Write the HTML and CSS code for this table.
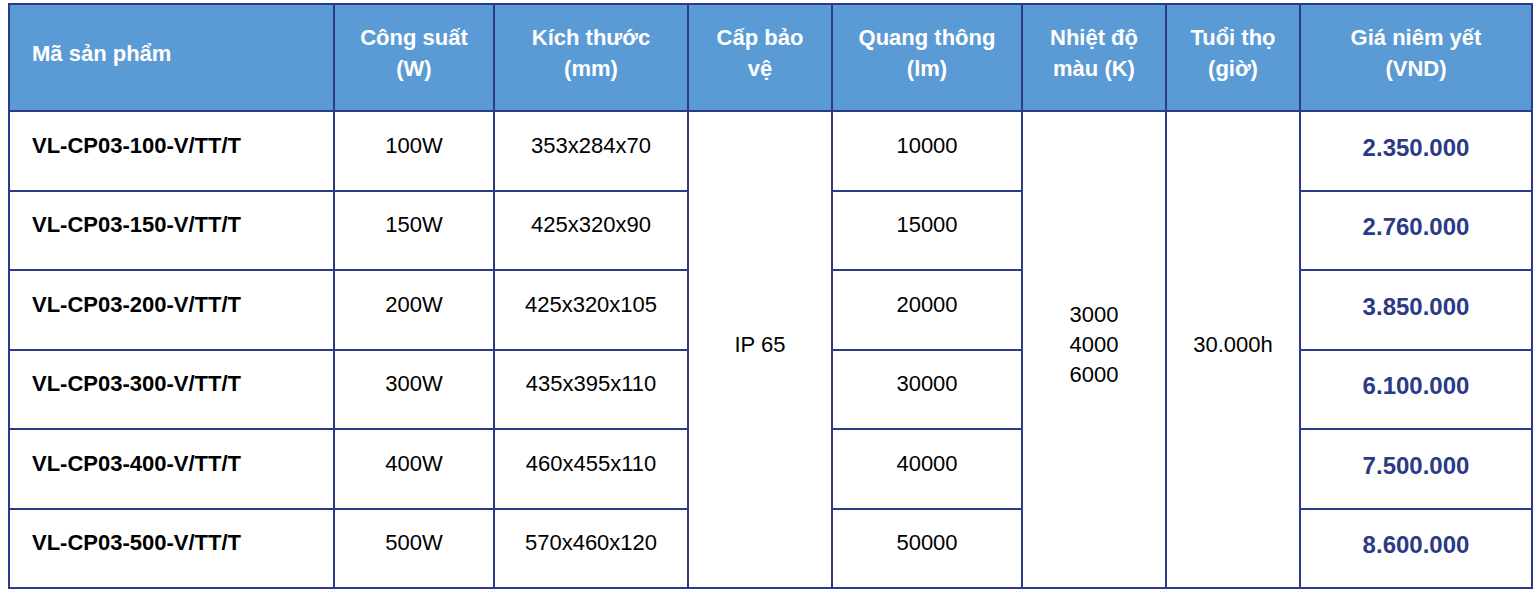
FILE: index.html
```html
<!DOCTYPE html>
<html lang="vi">
<head>
<meta charset="utf-8">
<title>Bảng giá VL-CP03</title>
<link rel="stylesheet" href="styles.css">
</head>
<body>
<div class="wrap">
<table class="price-table">
  <colgroup>
    <col class="c1"><col class="c2"><col class="c3"><col class="c4"><col class="c5"><col class="c6"><col class="c7"><col class="c8">
  </colgroup>
  <thead>
    <tr>
      <th class="left">Mã sản phẩm</th>
      <th>Công suất<br>(W)</th>
      <th>Kích thước<br>(mm)</th>
      <th>Cấp bảo<br>vệ</th>
      <th>Quang thông<br>(lm)</th>
      <th>Nhiệt độ<br>màu (K)</th>
      <th>Tuổi thọ<br>(giờ)</th>
      <th>Giá niêm yết<br>(VND)</th>
    </tr>
  </thead>
  <tbody>
    <tr>
      <td class="code">VL-CP03-100-V/TT/T</td>
      <td>100W</td>
      <td>353x284x70</td>
      <td rowspan="6">IP 65</td>
      <td>10000</td>
      <td rowspan="6" class="multi">3000<br>4000<br>6000</td>
      <td rowspan="6">30.000h</td>
      <td class="price">2.350.000</td>
    </tr>
    <tr>
      <td class="code">VL-CP03-150-V/TT/T</td>
      <td>150W</td>
      <td>425x320x90</td>
      <td>15000</td>
      <td class="price">2.760.000</td>
    </tr>
    <tr>
      <td class="code">VL-CP03-200-V/TT/T</td>
      <td>200W</td>
      <td>425x320x105</td>
      <td>20000</td>
      <td class="price">3.850.000</td>
    </tr>
    <tr>
      <td class="code">VL-CP03-300-V/TT/T</td>
      <td>300W</td>
      <td>435x395x110</td>
      <td>30000</td>
      <td class="price">6.100.000</td>
    </tr>
    <tr>
      <td class="code">VL-CP03-400-V/TT/T</td>
      <td>400W</td>
      <td>460x455x110</td>
      <td>40000</td>
      <td class="price">7.500.000</td>
    </tr>
    <tr>
      <td class="code">VL-CP03-500-V/TT/T</td>
      <td>500W</td>
      <td>570x460x120</td>
      <td>50000</td>
      <td class="price">8.600.000</td>
    </tr>
  </tbody>
</table>
</div>
</body>
</html>
```
FILE: styles.css
```css
html, body {
  margin: 0;
  padding: 0;
  background: #ffffff;
}
.wrap {
  padding: 3px 0 0 8px;
}
.price-table {
  border-collapse: collapse;
  table-layout: fixed;
  width: 1523px;
  font-family: "Liberation Sans", Arial, sans-serif;
  color: #000;
}
.c1 { width: 325px; }
.c2 { width: 160px; }
.c3 { width: 194px; }
.c4 { width: 144px; }
.c5 { width: 190px; }
.c6 { width: 144px; }
.c7 { width: 134px; }
.c8 { width: 232px; }

.price-table th,
.price-table td {
  border: 2px solid #2d3a88;
  text-align: center;
  vertical-align: middle;
  padding: 0 0 10px 0;
}
.price-table th {
  background: #5b9bd5;
  color: #ffffff;
  font-weight: bold;
  font-size: 22px;
  line-height: 31px;
  height: 107px;
  box-sizing: border-box;
  padding-bottom: 9px;
}
.price-table th.left {
  text-align: left;
  padding-left: 22px;
}
.price-table td {
  font-size: 22px;
  line-height: 26px;
  height: 79.5px;
  box-sizing: border-box;
}
.price-table td.code {
  text-align: left;
  font-weight: bold;
  padding-left: 22px;
}
.price-table td.multi {
  line-height: 30px;
}
.price-table td.price {
  color: #2b3a87;
  font-weight: bold;
  font-size: 24px;
  padding-bottom: 6px;
}
```
